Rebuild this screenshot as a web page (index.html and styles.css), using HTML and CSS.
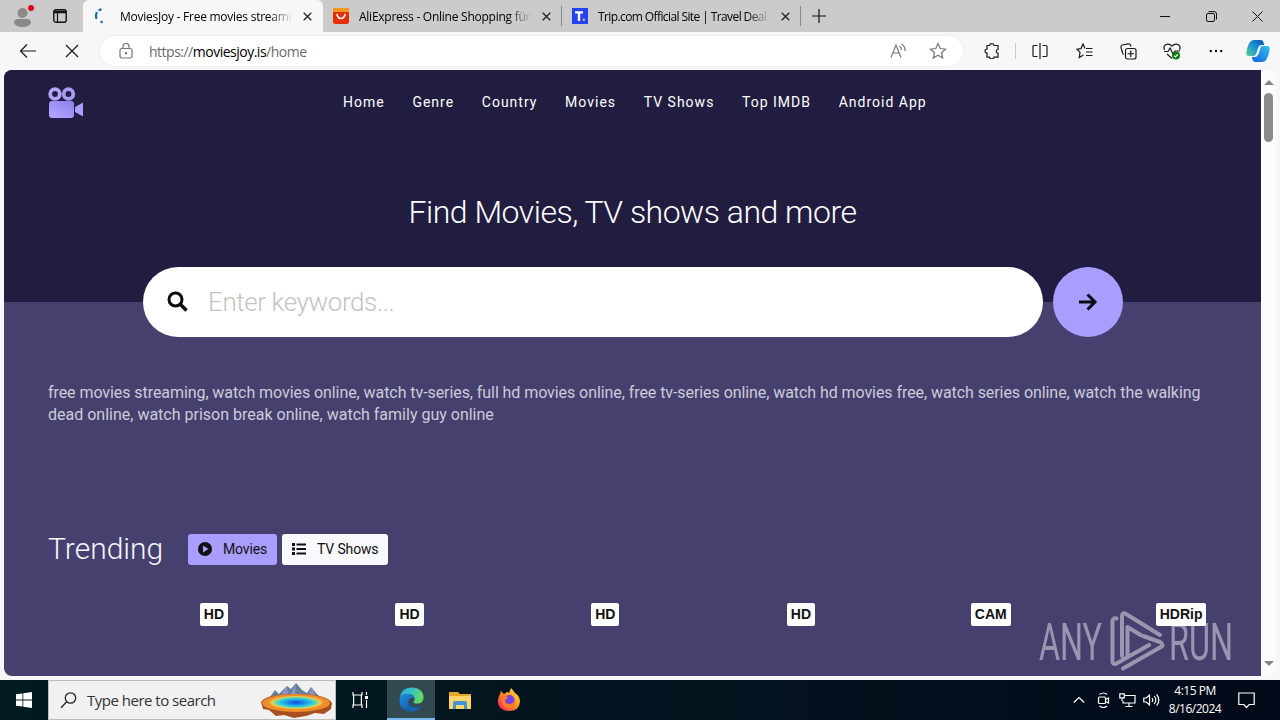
FILE: index.html
```html
<!DOCTYPE html>
<html lang="en">

<head>
    <meta charset="UTF-8">
    <meta name="viewport" content="width=device-width, initial-scale=1.0">
    <title>MoviesJoy - Free movies streaming</title>
    <link rel="stylesheet" href="styles.css">
</head>

<body>
    <!-- tab strip -->
    <div class="tabs">
        <div class="profile">
            <svg width="20" height="24" viewBox="0 0 20 24"><circle cx="8.500" cy="9" r="5" fill="#8b8885"/><path d="M0 19q0-4 4-4h9q4 0 4 4-2 4-8.500 4T0 19z" fill="#8b8885"/><circle cx="17" cy="4" r="3" fill="#e3001b"/></svg>
        </div>
        <div class="tab-menu">
            <svg width="14" height="14" viewBox="0 0 14 14" fill="none" stroke="#111"><rect x=".8" y=".8" width="12.400" height="12.400" rx="2" stroke-width="1.400"/><path d="M1 3h12" stroke-width="2.500"/><path d="M4.500 4v9" stroke-width="1.200"/></svg>
        </div>
        <div class="tab active">
            <svg class="fav" width="16" height="16" viewBox="0 0 16 16" fill="none" stroke="#1b6fa8" stroke-width="2.400" stroke-linecap="round"><path d="M7.500 2l1-.4M4.600 5Q3.300 7.500 4.300 10M9.500 14h.2"/></svg>
            <span class="tab-title">MoviesJoy - Free movies streaming</span>
            <svg class="x" width="9" height="9" viewBox="0 0 9 9"><path d="M.7.7l7.600 7.600M8.300.7L.7 8.300"/></svg>
        </div>
        <div class="tab">
            <svg class="fav" width="16" height="16" viewBox="0 0 16 16"><rect width="16" height="16" rx="2.500" fill="#e62e04"/><path d="M0 4V2.500Q0 0 2.500 0h11Q16 0 16 2.500V4z" fill="#f29a1f"/><path d="M4 6.500q1 4 4 4t4-4" fill="none" stroke="#fff" stroke-width="1.600" stroke-linecap="round"/></svg>
            <span class="tab-title">AliExpress - Online Shopping für</span>
            <svg class="x" width="9" height="9" viewBox="0 0 9 9"><path d="M.7.7l7.600 7.600M8.300.7L.7 8.300"/></svg>
        </div>
        <div class="tab">
            <svg class="fav" width="16" height="16" viewBox="0 0 16 16"><path fill="#2442f0" d="M0 0h16v16H0z"/><path d="M3 4.400h8M7 4.400V13" stroke="#fff" stroke-width="2.400"/><circle cx="11.800" cy="11.800" r="1.300" fill="#c9b98a"/></svg>
            <span class="tab-title tight">Trip.com Official Site | Travel Deal</span>
            <svg class="x" width="9" height="9" viewBox="0 0 9 9"><path d="M.7.7l7.600 7.600M8.300.7L.7 8.300"/></svg>
        </div>
        <div class="new-tab">
            <svg width="14" height="14" viewBox="0 0 14 14"><path d="M7 0v14M0 7h14" stroke="#111" stroke-width="1.200"/></svg>
        </div>
        <div class="win-btns">
            <div><svg width="10" height="10" viewBox="0 0 10 10"><path d="M0 5.500h10"/></svg></div>
            <div><svg width="11" height="11" viewBox="0 0 11 11"><rect x=".5" y="2.500" width="8" height="8" rx="1.500"/><path d="M2.500.6H8Q10.500.6 10.500 3v5.500"/></svg></div>
            <div><svg width="11" height="11" viewBox="0 0 11 11"><path d="M.5.5l10 10M10.500.5l-10 10"/></svg></div>
        </div>
    </div>

    <!-- address bar -->
    <div class="toolbar">
        <div class="tool"><svg width="18" height="16" viewBox="0 0 18 16"><path d="M17 8H1.500M8 1.500L1.500 8 8 14.500"/></svg></div>
        <div class="tool"><svg width="14" height="14" viewBox="0 0 14 14"><path d="M1 1l12 12M13 1L1 13"/></svg></div>
        <div class="address">
            <svg class="lock" width="14" height="16" viewBox="0 0 14 16"><rect x="1" y="5.500" width="12" height="9.500" rx="1.800"/><path d="M4 5.500V3.500a3 3 0 0 1 6 0v2"/><circle cx="7" cy="10.200" r=".6"/></svg>
            <span class="url">https://<b>moviesjoy.is</b>/home</span>
            <svg class="read" width="17" height="16" viewBox="0 0 17 16"><path d="M1 14.500L6 2l5 12.500M3 10h6M9.500 3q2 1.500 2 4M11.500 1q4 2.500 3.500 7"/></svg>
            <svg class="fave" width="18" height="18" viewBox="0 0 18 18"><path d="M9 1.500l2.200 5 5.300.6-4 3.600 1.200 5.300L9 13.300 4.300 16l1.200-5.300-4-3.600 5.300-.6z"/></svg>
        </div>
        <div class="tool puzzle"><svg width="16" height="16" viewBox="0 0 16 16"><path d="M3 2.500h2.500a2.300 2.300 0 0 1 4.500 0h4v4a1.800 1.800 0 1 0 0 3.600v4h-4a2.300 2.300 0 0 1-4.500 0H3v-4a2 2 0 0 1 0-4z"/></svg></div>
        <div class="divider"></div>
        <div class="tool"><svg width="16" height="16" viewBox="0 0 16 16"><path d="M5.500 2.500H2Q1 2.500 1 3.500v9q0 1 1 1h3.500M10.500 2.500H14q1 0 1 1v9q0 1-1 1h-3.500M8 0v16"/></svg></div>
        <div class="tool"><svg width="17" height="16" viewBox="0 0 17 16"><path d="M9 5.500L7 1 5 5.600 1 6.200l3 3.200-.7 5.100L7.500 12M10 5.500h6.500M10 9h6.500M10 12.500h6.500"/></svg></div>
        <div class="tool"><svg width="17" height="17" viewBox="0 0 17 17"><rect x="5.500" y="5.500" width="10.500" height="10.500" rx="2"/><path d="M10.750 7.500v6.500M7.500 10.750H14M3.500 11.500Q2.800 11 2.600 10L1 4.300Q.8 2.500 2.300 2L8 .8q2-.2 2.600 1.500l.4 1.200"/></svg></div>
        <div class="tool"><svg width="18" height="17" viewBox="0 0 18 17"><path d="M1.500 7Q0 3.500 2.500 1.700 6 0 9 3.200 12 0 15.500 1.700 18 3.500 16.500 7M1 8.500h4L7 5l3 6 2-3h5M4 11l5 4.500"/><circle cx="13" cy="12.500" r="4" fill="#107c10" stroke="none"/><path d="M11.200 12.700l1.200 1.200 2.500-2.600" stroke="#fff"/></svg></div>
        <div class="tool"><svg width="14" height="4" viewBox="0 0 14 4"><g fill="#111" stroke="none"><circle cx="1.800" cy="2" r="1.200"/><circle cx="7" cy="2" r="1.200"/><circle cx="12.200" cy="2" r="1.200"/></g></svg></div>
        <div class="copilot">
            <svg width="24" height="24" viewBox="0 0 24 24">
                <defs>
                    <linearGradient id="cp1" x1="1" y1="0" x2="0" y2="1"><stop offset="0" stop-color="#0a4fb0"/><stop offset=".5" stop-color="#1b93d8"/><stop offset="1" stop-color="#5bd08a"/></linearGradient>
                    <linearGradient id="cp2" x1="1" y1="0" x2="0" y2="1"><stop offset="0" stop-color="#2fc0f0"/><stop offset="1" stop-color="#1560e0"/></linearGradient>
                </defs>
                <path d="M8 1h7q2 0 2.700 3l.5 2H15q-2 0-2.800 2.500l-2 6.500Q9.500 17 7 17H3Q0 17 .3 13.500 1 8 3.500 3.500 5 1 8 1z" fill="url(#cp1)"/>
                <path d="M16 23H9q-2 0-2.700-3l-.5-2H9q2 0 2.800-2.500l2-6.500Q14.500 7 17 7h4q3 0 2.700 3.500-.7 5.500-3.200 10Q19 23 16 23z" fill="url(#cp2)"/>
                <path d="M14.800 7.500q-1.300.2-2 2l-1.500 5q-.6 1.800-1.600 2.500 1.800-.3 2.500-2.200l1.600-5q.4-1.500 1-2.300z" fill="#fff" stroke="#fff" stroke-width=".8"/>
            </svg>
        </div>
    </div>

    <!-- page -->
    <div class="viewport">
        <div class="site">
            <div class="hero">
                <div class="header">
                    <svg class="logo" width="36" height="32" viewBox="0 0 36 32">
                        <defs><linearGradient id="lg" x1="1" y1="0" x2="0" y2="1"><stop offset="0" stop-color="#8c80ec"/><stop offset="1" stop-color="#b4a9ff"/></linearGradient></defs>
                        <circle cx="7" cy="7" r="4.800" fill="none" stroke="#b0a6fb" stroke-width="3.800"/>
                        <circle cx="20.500" cy="7" r="4.800" fill="none" stroke="#a79bf6" stroke-width="3.800"/>
                        <rect x="1" y="14" width="25" height="17" rx="3" fill="url(#lg)"/>
                        <path d="M27 20l8-4.500v14L27 25z" fill="#a99eff"/>
                    </svg>
                    <ul class="nav">
                        <li>Home</li>
                        <li>Genre</li>
                        <li>Country</li>
                        <li>Movies</li>
                        <li>TV Shows</li>
                        <li>Top IMDB</li>
                        <li>Android App</li>
                    </ul>
                </div>
                <h1>Find Movies, TV shows and more</h1>
            </div>
            <div class="search">
                <div class="search-box">
                    <svg width="22" height="22" viewBox="0 0 22 22" fill="none" stroke="#0b0b0b" stroke-width="3"><circle cx="8.500" cy="8.500" r="6.500"/><path d="M13 13l6.500 6.500" stroke-width="3.500"/></svg>
                    <span>Enter keywords...</span>
                </div>
                <div class="search-go">
                    <svg width="20" height="18" viewBox="0 0 20 18" fill="none" stroke="#0d0a18" stroke-width="3"><path d="M1 9h16M9.500 1.500L17 9l-7.500 7.500"/></svg>
                </div>
            </div>
            <p class="keywords">free movies streaming, watch movies online, watch tv-series, full hd movies online, free tv-series online, watch hd movies free, watch series online, watch the walking<br>dead online, watch prison break online, watch family guy online</p>
            <div class="trending">
                <h2>Trending</h2>
                <div class="btn btn-on">
                    <svg width="14" height="14" viewBox="0 0 14 14"><circle cx="7" cy="7" r="7" fill="#111"/><path d="M5 3.600l5.400 3.400L5 10.400z" fill="#a99eff"/></svg>
                    <span>Movies</span>
                </div>
                <div class="btn">
                    <svg width="14" height="12" viewBox="0 0 14 12" fill="#111"><path d="M0 0h3v3H0zM0 4.500h3v3H0zM0 9h3v3H0zM4.500.5H14v2H4.500zM4.500 5H14v2H4.500zM4.500 9.500H14v2H4.500z"/></svg>
                    <span>TV Shows</span>
                </div>
            </div>
            <div class="films">
                <div class="film"><span>HD</span></div>
                <div class="film"><span>HD</span></div>
                <div class="film"><span>HD</span></div>
                <div class="film"><span>HD</span></div>
                <div class="film"><span>CAM</span></div>
                <div class="film"><span>HDRip</span></div>
            </div>
        </div>
        <div class="scrollbar">
            <div class="arrow-up"></div>
            <div class="thumb"></div>
            <div class="arrow-down"></div>
        </div>
    </div>

    <svg class="watermark" width="198" height="66" viewBox="0 0 198 66">
        <text x="2" y="51" font-size="52" textLength="63" lengthAdjust="spacingAndGlyphs">ANY</text>
        <text x="132" y="51" font-size="52" textLength="64" lengthAdjust="spacingAndGlyphs">RUN</text>
        <path d="M79.500 9.500q-4-1-4 3V52q0 4 4 2.500L112 36M85 47V7q0-4 4-2l34 21M90.500 47V18l13 8M106 27l17 6q5 3 0 5.500L86 59.500"/>
    </svg>

    <!-- windows taskbar -->
    <div class="taskbar">
        <div class="start">
            <svg width="16" height="16" viewBox="0 0 16 16" fill="#fff"><path d="M0 2.300l6.500-.9v6.200H0zM7.300 1.300L16 0v7.600H7.300zM0 8.400h6.500v6.200L0 13.700zM7.300 8.400H16V16l-8.700-1.300z"/></svg>
        </div>
        <div class="find">
            <svg width="17" height="17" viewBox="0 0 17 17" fill="none" stroke="#222" stroke-width="1.300"><circle cx="10.500" cy="6" r="5.200"/><path d="M6.700 9.800L1 15.800"/></svg>
            <span>Type here to search</span>
            <svg class="spring" width="74" height="36" viewBox="0 0 74 36">
                <defs><radialGradient id="pool"><stop offset="0" stop-color="#1746d8"/><stop offset=".35" stop-color="#199be8"/><stop offset=".65" stop-color="#3dd6cf"/><stop offset=".85" stop-color="#e9d04c"/><stop offset="1" stop-color="#f0902a"/></radialGradient></defs>
                <path d="M10 15l5-7 4 4 8-8 4 3 5-6 6 7 5 3 4-6 5 6 5 5z" fill="#64819c"/>
                <path d="M36 1l-6 13h5zM27 4l-6 9h7zM52 5l-4 9h7z" fill="#9a8fc4"/>
                <path d="M1 20Q5 12 36 12t36 9l-1 6-7 5-9-1-9 3-12 2-10-3-8 1-7-6-6-1z" fill="#a84f20"/>
                <ellipse cx="36" cy="21" rx="34" ry="9" fill="#f08b2c"/>
                <ellipse cx="36" cy="20.500" rx="28" ry="7" fill="url(#pool)"/>
            </svg>
        </div>
        <div class="apps">
            <div class="app">
                <svg width="18" height="16" viewBox="0 0 18 16" fill="none" stroke="#fff" stroke-width="1.200"><path d="M2 0v3h9V0M2 16v-3h9v3M2.600 3v10M10.400 3v10M15.500 0v3M15.500 8v8"/><path d="M14 4h3v3h-3z" fill="#fff" stroke="none"/></svg>
            </div>
            <div class="app current">
                <svg width="25" height="25" viewBox="0 0 25 25">
                    <defs>
                        <linearGradient id="ed1" x1="0" y1="0" x2="1" y2=".3"><stop offset="0" stop-color="#2aa5e0"/><stop offset=".5" stop-color="#35c1c8"/><stop offset="1" stop-color="#62dc62"/></linearGradient>
                        <linearGradient id="ed2" x1="0" y1="0" x2="1" y2="1"><stop offset="0" stop-color="#1b8fdd"/><stop offset="1" stop-color="#0d4a9c"/></linearGradient>
                    </defs>
                    <path d="M.7 11Q2 .5 12.500.5 24.500 1 24.500 11q-.5 5.500-6 5.500-4 0-4-1.500 1.500-1.500 1-4-1-4-6-4Q3 7 .7 11z" fill="url(#ed1)"/>
                    <path d="M.5 12.500Q2 7 9 7q5 0 6.500 4-6-1-6.500 4.500Q9.500 21 16 21q4 0 6.500-2Q19 24.500 12.500 24.500.5 24 .5 12.500z" fill="url(#ed2)"/>
                    <path d="M9 15.500Q8 22 15 24q5-1 7.500-5-2.500 1.500-6 1.500-6-.5-7.500-5z" fill="#1663b8"/>
                </svg>
            </div>
            <div class="app">
                <svg width="22" height="19" viewBox="0 0 22 19"><path d="M0 1h9l2 2h11v15H0z" fill="#e5a72a"/><path d="M0 5h22v13H0z" fill="#fbd568"/><path d="M4 18v-6q0-2 2-2h10q2 0 2 2v6h-3v-4H7v4z" fill="#3f93d2"/></svg>
            </div>
            <div class="app">
                <svg width="24" height="24" viewBox="0 0 24 24">
                    <defs><linearGradient id="ff" x1="1" y1="0" x2="0" y2="1"><stop offset="0" stop-color="#fff04a"/><stop offset=".5" stop-color="#ff8a1c"/><stop offset="1" stop-color="#f5156c"/></linearGradient></defs>
                    <path d="M3 6l1-3 3 3 3-2q2 0 2 1l2-5q2 2 4 5 5 3 5 9-1 9-11 9Q1 22.500.8 13 1 9 3 6z" fill="url(#ff)"/>
                    <circle cx="12.500" cy="12" r="5" fill="#7542e5"/>
                    <path d="M4 8q4-1 7 1.500-1 2-3 2 0 4 4 4.500 4 0 5.500-3 1.500 7-6 7.500Q4 20 4 8z" fill="#ff7a2d"/>
                </svg>
            </div>
        </div>
        <div class="tray">
            <div class="tray-icon"><svg width="12" height="8" viewBox="0 0 12 8"><path d="M.8 6.500L6 1.500l5.200 5"/></svg></div>
            <div class="tray-icon"><svg width="13" height="16" viewBox="0 0 13 16"><rect x="1.500" y="5" width="7" height="6.500" rx="1"/><path d="M8.500 7.500l3-1.500v5l-3-1.500M2.500 2.500q4-3 7.500 0M2.500 14q4 3 7.500 0"/></svg></div>
            <div class="tray-icon"><svg width="17" height="15" viewBox="0 0 17 15"><path d="M6 2.500h10v7.500H4V8M10 10v3.500M6.500 13.500h7"/><path d="M.8.8h4.500v4H.8zM3 5v3"/></svg></div>
            <div class="tray-icon"><svg width="17" height="14" viewBox="0 0 17 14"><path d="M.8 5h2.400L6.500 2v10L3.200 9H.8zM9 5q1.500 2 0 4M11.300 3q3 4 0 8M13.600 1.300q4.500 5.700 0 11.400"/></svg></div>
            <div class="clock"><div>4:15 PM</div><div>8/16/2024</div></div>
            <svg class="note" width="17" height="17" viewBox="0 0 17 17"><path d="M.8 1h15.400v11.500h-5L8.500 15.500l-2.700-3h-5z"/></svg>
        </div>
    </div>
</body>

</html>
```
FILE: styles.css
```css
* {
    margin: 0;
    padding: 0;
    box-sizing: border-box;
}

body {
    width: 1280px;
    height: 720px;
    overflow: hidden;
    background-color: #f7f7f7;
    font-family: "Open Sans", "Noto Sans", sans-serif;
}

svg {
    display: block;
    flex-shrink: 0;
}

/* tab strip */
.tabs {
    display: flex;
    height: 32px;
    align-items: center;
    background-color: #cbcbcb;
}

.profile {
    width: 38px;
    padding: 0 0 1px 14px;
}

.tab-menu {
    width: 45px;
    padding-left: 15px;
}

.tab {
    display: flex;
    width: 239px;
    height: 32px;
    align-items: center;
    padding-left: 10px;
    position: relative;
}

.tab::after {
    content: "";
    position: absolute;
    right: 0;
    top: 6px;
    width: 1px;
    height: 20px;
    background-color: #888;
}

.active {
    width: 240px;
    padding-left: 9px;
    background-color: #f7f7f7;
    border-radius: 6px 6px 0 0;
}

.active::after {
    display: none;
}

.fav {
    margin-right: 10px;
}

.active .fav {
    margin-right: 12px;
}

.tab-title {
    width: 173px;
    margin-right: 10px;
    overflow: hidden;
    white-space: nowrap;
    color: #000;
    font-size: 12px;
    letter-spacing: -0.25px;
    -webkit-mask-image: linear-gradient(to right, #000 86%, transparent);
    mask-image: linear-gradient(to right, #000 86%, transparent);
}

.tight {
    letter-spacing: -0.6px;
}

.x {
    fill: none;
    stroke: #222;
    stroke-width: 1.3;
}

.new-tab {
    padding-left: 11px;
}

.win-btns {
    display: flex;
    margin-left: auto;
}

.win-btns div {
    display: flex;
    width: 46px;
    justify-content: center;
}

.win-btns svg {
    fill: none;
    stroke: #111;
}

/* toolbar */
.toolbar {
    display: flex;
    height: 38px;
    padding-left: 6px;
    align-items: center;
}

.tool {
    display: flex;
    width: 44px;
    justify-content: center;
}

.tool svg,
.address svg {
    fill: none;
    stroke: #1a1a1a;
    stroke-width: 1.2;
}

.address {
    display: flex;
    width: 863px;
    height: 30px;
    margin: 0 7px 0 6px;
    padding: 0 16px 0 19px;
    align-items: center;
    border-radius: 15px;
    background-color: #fff;
    box-shadow: 0 0 2px #ddd;
}

.address svg {
    stroke: #777;
}

.url {
    margin: 0 auto 0 16px;
    color: #6b6b6b;
    font-size: 14px;
    letter-spacing: -0.5px;
}

.url b {
    color: #000;
    font-weight: 400;
}

.read {
    margin-right: 22px;
}

.divider {
    width: 1px;
    height: 16px;
    margin: 0 2px 0 1px;
    background-color: #ccc;
}

.copilot {
    padding-left: 8px;
}

/* page */
.viewport {
    display: flex;
    width: 1272px;
    height: 606px;
    margin-left: 4px;
    overflow: hidden;
    border-radius: 8px;
    background-color: #fcfcfc;
}

.site {
    width: 1257px;
    background-color: #45406e;
    font-family: Roboto, sans-serif;
}

.hero {
    height: 232px;
    background-color: #211d41;
}

.header {
    display: flex;
    height: 64px;
    padding-left: 44px;
    align-items: center;
}

.logo {
    margin-top: 1px;
}

.nav {
    display: flex;
    margin-left: 259px;
    gap: 27.7px;
    list-style: none;
    color: #fff;
    font-size: 14px;
    letter-spacing: 1px;
}

h1 {
    margin-top: 59px;
    text-align: center;
    color: #fff;
    font-size: 32px;
    font-weight: 300;
    line-height: 38px;
    letter-spacing: -0.5px;
}

.search {
    display: flex;
    margin: -35px 0 0 139px;
    gap: 10px;
}

.search-box {
    display: flex;
    width: 900px;
    height: 70px;
    padding-left: 24px;
    gap: 19px;
    align-items: center;
    border-radius: 35px;
    background-color: #fff;
    color: #c3c3c3;
    font-size: 26px;
    font-weight: 300;
    letter-spacing: -0.4px;
}

.search-go {
    display: flex;
    width: 70px;
    height: 70px;
    align-items: center;
    justify-content: center;
    border-radius: 50%;
    background-color: #a99eff;
}

.keywords {
    margin: 45px 0 0 44px;
    color: #cdcbd9;
    font-size: 16px;
    line-height: 22px;
    white-space: nowrap;
}

.keywords::first-line {
    letter-spacing: -0.07px;
}

.trending {
    display: flex;
    height: 40px;
    margin: 103px 0 0 44px;
    align-items: center;
}

h2 {
    width: 140px;
    padding-bottom: 2px;
    color: #f5f4ff;
    font-size: 30px;
    font-weight: 300;
}

.btn {
    display: flex;
    height: 31px;
    padding: 0 10px;
    gap: 11px;
    align-items: center;
    border-radius: 3px;
    background-color: #f8f9fc;
    color: #111;
    font-size: 14px;
    letter-spacing: -0.15px;
}

.btn-on {
    margin-right: 5px;
    background-color: #a99eff;
}

.films {
    display: grid;
    grid-template-columns: repeat(6, 180px);
    margin: 34px 0 0 44px;
    column-gap: 15.7px;
}

.film {
    display: flex;
    justify-content: flex-end;
}

.film span {
    height: 23px;
    padding: 0 4px;
    border-radius: 2px;
    background-color: #fff;
    color: #111;
    font: bold 14px/23px "Liberation Sans", sans-serif;
}

.scrollbar {
    display: flex;
    width: 15px;
    flex-direction: column;
    align-items: center;
    padding: 10px 0;
}

.arrow-up {
    border: 5px solid transparent;
    border-top: none;
    border-bottom: 5px solid #858585;
}

.thumb {
    width: 9px;
    height: 49px;
    margin-top: 8px;
    border-radius: 5px;
    background-color: #8b8b8b;
}

.arrow-down {
    margin-top: auto;
    border: 5px solid transparent;
    border-bottom: none;
    border-top: 5px solid #858585;
}

/* overlay mark in the corner */
.watermark {
    position: absolute;
    left: 1037px;
    top: 609px;
    fill: #fff;
    font-family: Roboto, sans-serif;
    font-weight: 400;
    opacity: 0.45;
}

.watermark path {
    fill: none;
    stroke: #fff;
    stroke-width: 4;
    stroke-linecap: round;
    stroke-linejoin: round;
}

/* taskbar */
.taskbar {
    display: flex;
    height: 40px;
    margin-top: 4px;
    align-items: center;
    background: linear-gradient(to right, #021a22, #02141f 50%, #030a19);
}

.start {
    display: flex;
    width: 48px;
    justify-content: center;
}

.find {
    display: flex;
    width: 288px;
    height: 40px;
    padding: 0 1px 0 11px;
    align-items: center;
    border: 1px solid #bbb;
    background-color: #f1f1f1;
    color: #333;
    font-size: 15px;
}

.find span {
    margin-left: 10px;
    letter-spacing: -0.5px;
}

.spring {
    margin-left: auto;
}

.apps {
    display: flex;
    gap: 1px;
}

.app {
    display: flex;
    width: 48px;
    height: 40px;
    align-items: center;
    justify-content: center;
}

.app:first-child {
    margin-right: 2px;
}

.current {
    border-bottom: 2px solid #76b9ed;
    background-color: #344a51;
}

.tray {
    display: flex;
    margin-left: auto;
    padding-right: 25px;
    align-items: center;
}

.tray-icon {
    display: flex;
    width: 24px;
    justify-content: center;
}

.tray svg {
    fill: none;
    stroke: #fff;
    stroke-width: 1.2;
}

.clock {
    width: 54px;
    margin-left: 5px;
    text-align: center;
    color: #fff;
    font-size: 12px;
    line-height: 18px;
    letter-spacing: -0.5px;
}

.tray .note {
    margin-left: 16px;
}
```
